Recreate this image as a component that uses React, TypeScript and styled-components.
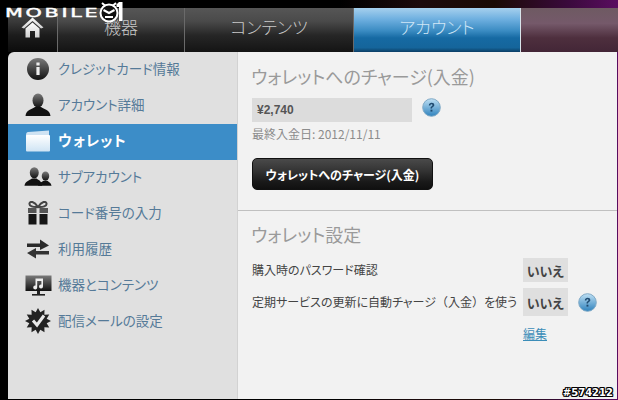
import React from "react";
import styled, { createGlobalStyle } from "styled-components";

const jp = `"Noto Sans CJK JP", "Noto Sans", sans-serif`;

const Global = createGlobalStyle`
  html, body { margin: 0; padding: 0; background: #000; }
  body { font-family: ${jp}; font-feature-settings: "palt"; }
  * { box-sizing: border-box; }
`;

const Page = styled.div`
  position: relative;
  width: 618px;
  height: 400px;
  overflow: hidden;
  display: flex;
  flex-direction: column;
  background: linear-gradient(90deg, #000 0%, #000 55%, #1c0a0c 68%, #1a0a04 80%, #3a0a3c 92%, #5a0c60 100%);
`;

const TopBar = styled.nav`
  display: flex;
  height: 44px;
  margin-top: 8px;
  margin-left: 8px;
  flex: none;
`;

const Tab = styled.div<{ $w: number; $active?: boolean }>`
  width: ${(p) => p.$w}px;
  flex: none;
  display: flex;
  align-items: center;
  justify-content: center;
  padding-bottom: 8px;
  font-size: 17px;
  font-weight: 300;
  color: ${(p) => (p.$active ? "#cfe6f6" : "#c8c8c8")};
  border-right: 1px solid ${(p) => (p.$active ? "#d9e4ea" : "#6a6a6a")};
  background: ${(p) =>
    p.$active
      ? "linear-gradient(180deg, #a6d0ee 0%, #6fb0e0 25%, #3a8bc2 52%, #166aa3 68%, #15659b 90%, #0c3f66 100%)"
      : "linear-gradient(180deg, #565656 0%, #4a4a4a 30%, #262626 62%, #141414 100%)"};
`;

const FillTab = styled.div`
  flex: 1;
  background: linear-gradient(180deg, #6e5a62 0%, #75596a 35%, #4e2f3e 68%, #432637 100%);
`;

const HomeTab = styled(Tab)`
  padding-bottom: 5px;
  background: linear-gradient(180deg, #4a4a4a 0%, #3a3a3a 30%, #1c1c1c 62%, #0c0c0c 100%);
`;

const Body = styled.div`
  flex: 1;
  display: flex;
  min-height: 0;
  margin-left: 8px;
  margin-right: 1px;
  margin-bottom: 1px;
`;

const Side = styled.aside`
  width: 230px;
  flex: none;
  background: #e0e0e0;
  border-top-left-radius: 6px;
  border-right: 1px solid #d2d2d2;
`;

const Item = styled.div<{ $active?: boolean }>`
  height: 36px;
  display: flex;
  align-items: center;
  gap: 6px;
  padding-left: 16px;
  width: 229px;
  padding-bottom: 5px;
  font-size: ${(p) => (p.$active ? "14.5px" : "13.5px")};
  letter-spacing: ${(p) => (p.$active ? "1px" : "0")};
  color: ${(p) => (p.$active ? "#fff" : "#557a98")};
  font-weight: ${(p) => (p.$active ? 700 : 400)};
  background: ${(p) => (p.$active ? "#3c8dc8" : "transparent")};
`;

const IconSlot = styled.span`
  width: 28px;
  height: 26px;
  flex: none;
  display: flex;
  align-items: center;
  justify-content: center;
  margin-top: 3px;
`;

const Main = styled.main`
  flex: 1;
  background: #f2f2f2;
  display: flex;
  flex-direction: column;
`;

const Section = styled.section`
  padding: 10px 14px 0;
`;

const FirstSection = styled(Section)`
  padding-top: 11px;
  height: 159px;
  flex: none;
  border-bottom: 1px solid #c0c0c0;
`;

const Heading = styled.h2`
  margin: 0 0 0 -1px;
  height: 26px;
  line-height: 26px;
  font-size: 18px;
  font-weight: 400;
  color: #9a9a9a;
`;

const AmountRow = styled.div`
  display: flex;
  align-items: flex-start;
  gap: 10px;
  margin-top: 9px;
`;

const Amount = styled.div`
  width: 160px;
  height: 24px;
  padding-left: 5px;
  background: #dcdcdc;
  font: 700 12px/24px "Liberation Sans", sans-serif;
  color: #555;
`;

const DateLine = styled.div`
  margin-top: 3px;
  height: 18px;
  line-height: 18px;
  font-size: 12px;
  color: #8c8c8c;
`;

const ChargeButton = styled.button`
  display: block;
  margin-top: 15px;
  width: 181px;
  height: 32px;
  padding: 0;
  border: 1px solid #111;
  border-radius: 5px;
  background: linear-gradient(180deg, #4a4a4a 0%, #333 40%, #1a1a1a 75%, #101010 100%);
  color: #fff;
  font-family: ${jp};
  font-feature-settings: "palt";
  font-size: 12px;
  font-weight: 700;
`;

const SettingRow = styled.div<{ $h: number }>`
  display: flex;
  align-items: center;
  height: ${(p) => p.$h}px;
  font-size: 12px;
  color: #444;
`;

const Label = styled.div`
  width: 271px;
  flex: none;
  white-space: nowrap;
  padding-bottom: 2px;
`;

const FullParen = styled.span`
  font-feature-settings: "palt" 0;
`;

const Rows = styled.div`
  margin-top: 11px;
  display: flex;
  flex-direction: column;
  gap: 6px;
`;

const No = styled.div`
  width: 45px;
  height: 100%;
  display: flex;
  align-items: center;
  justify-content: center;
  background: #dfdfdf;
  font-size: 13px;
  font-weight: 700;
  color: #444;
`;

const Help = styled.span`
  margin-left: 10px;
  display: inline-flex;
`;

const EditLine = styled.div`
  margin: 9px 0 0 271px;
  font-size: 12px;
`;

const EditLink = styled.a`
  color: #3b8db8;
  text-decoration: underline;
`;

const Logo = styled.div`
  position: absolute;
  left: 5px;
  top: 0;
  display: flex;
  align-items: center;
  height: 25px;
  color: #fff;
  font: 400 11.5px/22px "DejaVu Sans", sans-serif;
`;

const LogoWord = styled.span`
  display: inline-block;
  width: 93px;
  letter-spacing: 1.5px;
  transform: scaleX(1.8);
  transform-origin: left center;
  white-space: nowrap;
  -webkit-text-stroke: 0.4px #fff;
`;

const Watermark = styled.div`
  position: absolute;
  right: 5px;
  bottom: 1px;
  font: 700 10px/12px "DejaVu Sans", sans-serif;
  color: #fff;
  text-shadow: 1px 0 #000, -1px 0 #000, 0 1px #000, 0 -1px #000, 1px 1px #000, -1px -1px #000, 1px -1px #000, -1px 1px #000;
`;

const Grad = () => (
  <svg width="0" height="0" style={{ position: "absolute" }}>
    <defs>
      <linearGradient id="dk" x1="0" y1="0" x2="0" y2="1">
        <stop offset="0" stopColor="#7a7a7a" />
        <stop offset="1" stopColor="#111" />
      </linearGradient>
      <linearGradient id="wl" x1="0" y1="0" x2="0" y2="1">
        <stop offset="0" stopColor="#fff" />
        <stop offset="1" stopColor="#cfe4f4" />
      </linearGradient>
      <linearGradient id="hp" x1="0" y1="0" x2="0" y2="1">
        <stop offset="0" stopColor="#bfe0f4" />
        <stop offset="1" stopColor="#2f82bd" />
      </linearGradient>
      <linearGradient id="hm" x1="0" y1="0" x2="0" y2="1">
        <stop offset="0" stopColor="#fff" />
        <stop offset="1" stopColor="#d0d0d0" />
      </linearGradient>
    </defs>
  </svg>
);

const HelpIcon = () => (
  <svg width="19" height="19" viewBox="0 0 19 19">
    <circle cx="9.5" cy="9.5" r="8.8" fill="url(#hp)" stroke="#7fa9c6" strokeWidth="1" />
    <path d="M6.8 7.4c.1-1.8 1.3-2.6 2.8-2.6 1.6 0 2.7.9 2.7 2.2 0 1-.6 1.5-1.3 2-.7.5-1 .8-1 1.6H8.5c0-1.3.4-1.8 1.1-2.3.6-.4.9-.7.9-1.2 0-.6-.4-.9-1-.9-.7 0-1 .4-1.1 1.2z" fill="#1f4a70" />
    <rect x="8.5" y="11.7" width="1.9" height="1.9" fill="#1f4a70" />
  </svg>
);

const HomeIcon = () => (
  <svg width="23" height="21" viewBox="0 0 23 21">
    <path d="M11.5 0.5 L22.5 10.5 L20 11.5 L11.5 4 L3 11.5 L0.5 10.5 Z" fill="url(#hm)" />
    <path d="M4.5 11.5 L11.5 5.5 L18.5 11.5 V20.5 H14 V14 H9 V20.5 H4.5 Z" fill="url(#hm)" />
  </svg>
);

const InfoIcon = () => (
  <svg width="24" height="24" viewBox="0 0 24 24">
    <circle cx="12" cy="12" r="11" fill="url(#dk)" />
    <rect x="10.4" y="5.5" width="3.2" height="3" fill="#eee" />
    <rect x="10.4" y="10" width="3.2" height="8" fill="#eee" />
  </svg>
);

const UserIcon = () => (
  <svg width="26" height="24" viewBox="0 0 26 24">
    <ellipse cx="13" cy="7.5" rx="5.5" ry="7" fill="url(#dk)" />
    <path d="M0.5 23 C1 17 7 16 10 14 h6 c3 2 9 3 9.5 9 z" fill="#111" />
  </svg>
);

const WalletIcon = () => (
  <svg width="26" height="22" viewBox="0 0 26 22">
    <path d="M1 5 C1 3 2 2 3 2 L24 0.5 V6 H1 Z" fill="#cfe3f3" />
    <rect x="1" y="5" width="24" height="16.5" rx="1" fill="url(#wl)" />
  </svg>
);

const GroupIcon = () => (
  <svg width="30" height="22" viewBox="0 0 30 22">
    <ellipse cx="11" cy="6.5" rx="4.8" ry="6" fill="url(#dk)" />
    <path d="M0.5 20.5 C1 15.5 6 14.5 8.5 12.5 h5 c2.5 2 5 2 6 8 z" fill="#111" />
    <ellipse cx="23" cy="10" rx="4" ry="5" fill="url(#dk)" />
    <path d="M15 20.5 C15.5 17 20 16 21 15 h4 c1 1 4 2 4.5 5.5 z" fill="#111" />
  </svg>
);

const GiftIcon = () => (
  <svg width="24" height="24" viewBox="0 0 24 24">
    <path d="M12 6 C8 0 4 0 3.5 2.5 C3 5 7 6.5 12 6 C17 6.5 21 5 20.5 2.5 C20 0 16 0 12 6 Z" fill="none" stroke="#444" strokeWidth="2" />
    <rect x="2" y="7" width="8.5" height="5" fill="#555" />
    <rect x="13.5" y="7" width="8.5" height="5" fill="#555" />
    <rect x="2.5" y="13" width="8" height="10.5" fill="#161616" />
    <rect x="13.5" y="13" width="8" height="10.5" fill="#161616" />
  </svg>
);

const SwapIcon = () => (
  <svg width="24" height="20" viewBox="0 0 24 20">
    <path d="M1 4.5 H14 V0.5 L23 6.5 L14 11 V8 H1 Z" fill="#2a2a2a" />
    <path d="M23 12 H10 V9 L1 14 L10 19.5 V15.5 H23 Z" fill="#333" />
  </svg>
);

const DeviceIcon = () => (
  <svg width="27" height="21" viewBox="0 0 27 21">
    <rect x="0.5" y="0.5" width="26" height="15.5" fill="url(#dk)" />
    <path d="M10.5 3.5 H18 V11.5 a2 2 0 1 1 -1.6 -2 V6 H12.2 V12.5 a2 2 0 1 1 -1.7 -2 Z" fill="#eee" />
    <rect x="12" y="16" width="3" height="3" fill="#222" />
    <rect x="7" y="19" width="13" height="1.6" fill="#222" />
  </svg>
);

const BadgeIcon = () => {
  const pts: string[] = [];
  for (let i = 0; i < 24; i++) {
    const r = i % 2 ? 9 : 13;
    const a = (i * Math.PI) / 12;
    pts.push(`${13 + r * Math.sin(a)},${13 - r * Math.cos(a)}`);
  }
  return (
    <svg width="26" height="26" viewBox="0 0 26 26">
      <polygon points={pts.join(" ")} fill="#222" />
      <path d="M8 12.5 L12 17 L19 7.5" fill="none" stroke="#e8e8e8" strokeWidth="3" />
    </svg>
  );
};

const LogoMark = () => (
  <svg width="28" height="25" viewBox="0 0 28 25" style={{ flex: "none" }}>
    <circle cx="11" cy="13" r="8.5" fill="#111" stroke="#fff" strokeWidth="2" />
    <path d="M5.5 10 L11 13 L16.5 10 M7 17 L15 17" stroke="#fff" strokeWidth="2" fill="none" />
    <path d="M4 3 L7.5 6 M18 3 L14.5 6" stroke="#fff" strokeWidth="2" />
    <rect x="21" y="2" width="3.5" height="19" fill="#fff" />
    <path d="M21 2 L18.5 4.5 V7 H21 Z" fill="#fff" />
  </svg>
);

const menu: { label: string; icon: React.ReactNode; active?: boolean }[] = [
  { label: "クレジットカード情報", icon: <InfoIcon /> },
  { label: "アカウント詳細", icon: <UserIcon /> },
  { label: "ウォレット", icon: <WalletIcon />, active: true },
  { label: "サブアカウント", icon: <GroupIcon /> },
  { label: "コード番号の入力", icon: <GiftIcon /> },
  { label: "利用履歴", icon: <SwapIcon /> },
  { label: "機器とコンテンツ", icon: <DeviceIcon /> },
  { label: "配信メールの設定", icon: <BadgeIcon /> },
];

export default function App() {
  return (
    <Page>
      <Global />
      <Grad />
      <TopBar>
        <HomeTab $w={50}>
          <HomeIcon />
        </HomeTab>
        <Tab $w={127}>機器</Tab>
        <Tab $w={169}>コンテンツ</Tab>
        <Tab $w={167} $active>アカウント</Tab>
        <FillTab />
      </TopBar>
      <Body>
        <Side>
          {menu.map((m) => (
            <Item key={m.label} $active={m.active}>
              <IconSlot>{m.icon}</IconSlot>
              {m.label}
            </Item>
          ))}
        </Side>
        <Main>
          <FirstSection>
            <Heading>ウォレットへのチャージ(入金)</Heading>
            <AmountRow>
              <Amount>¥2,740</Amount>
              <HelpIcon />
            </AmountRow>
            <DateLine>最終入金日: 2012/11/11</DateLine>
            <ChargeButton>ウォレットへのチャージ(入金)</ChargeButton>
          </FirstSection>
          <Section>
            <Heading>ウォレット設定</Heading>
            <Rows>
              <SettingRow $h={24}>
                <Label>購入時のパスワード確認</Label>
                <No>いいえ</No>
              </SettingRow>
              <SettingRow $h={28}>
                <Label>定期サービスの更新に自動チャージ<FullParen>（入金）</FullParen>を使う</Label>
                <No>いいえ</No>
                <Help><HelpIcon /></Help>
              </SettingRow>
            </Rows>
            <EditLine><EditLink>編集</EditLink></EditLine>
          </Section>
        </Main>
      </Body>
      <Logo><LogoWord>MOBILE</LogoWord><LogoMark /></Logo>
      <Watermark>#574212</Watermark>
    </Page>
  );
}
